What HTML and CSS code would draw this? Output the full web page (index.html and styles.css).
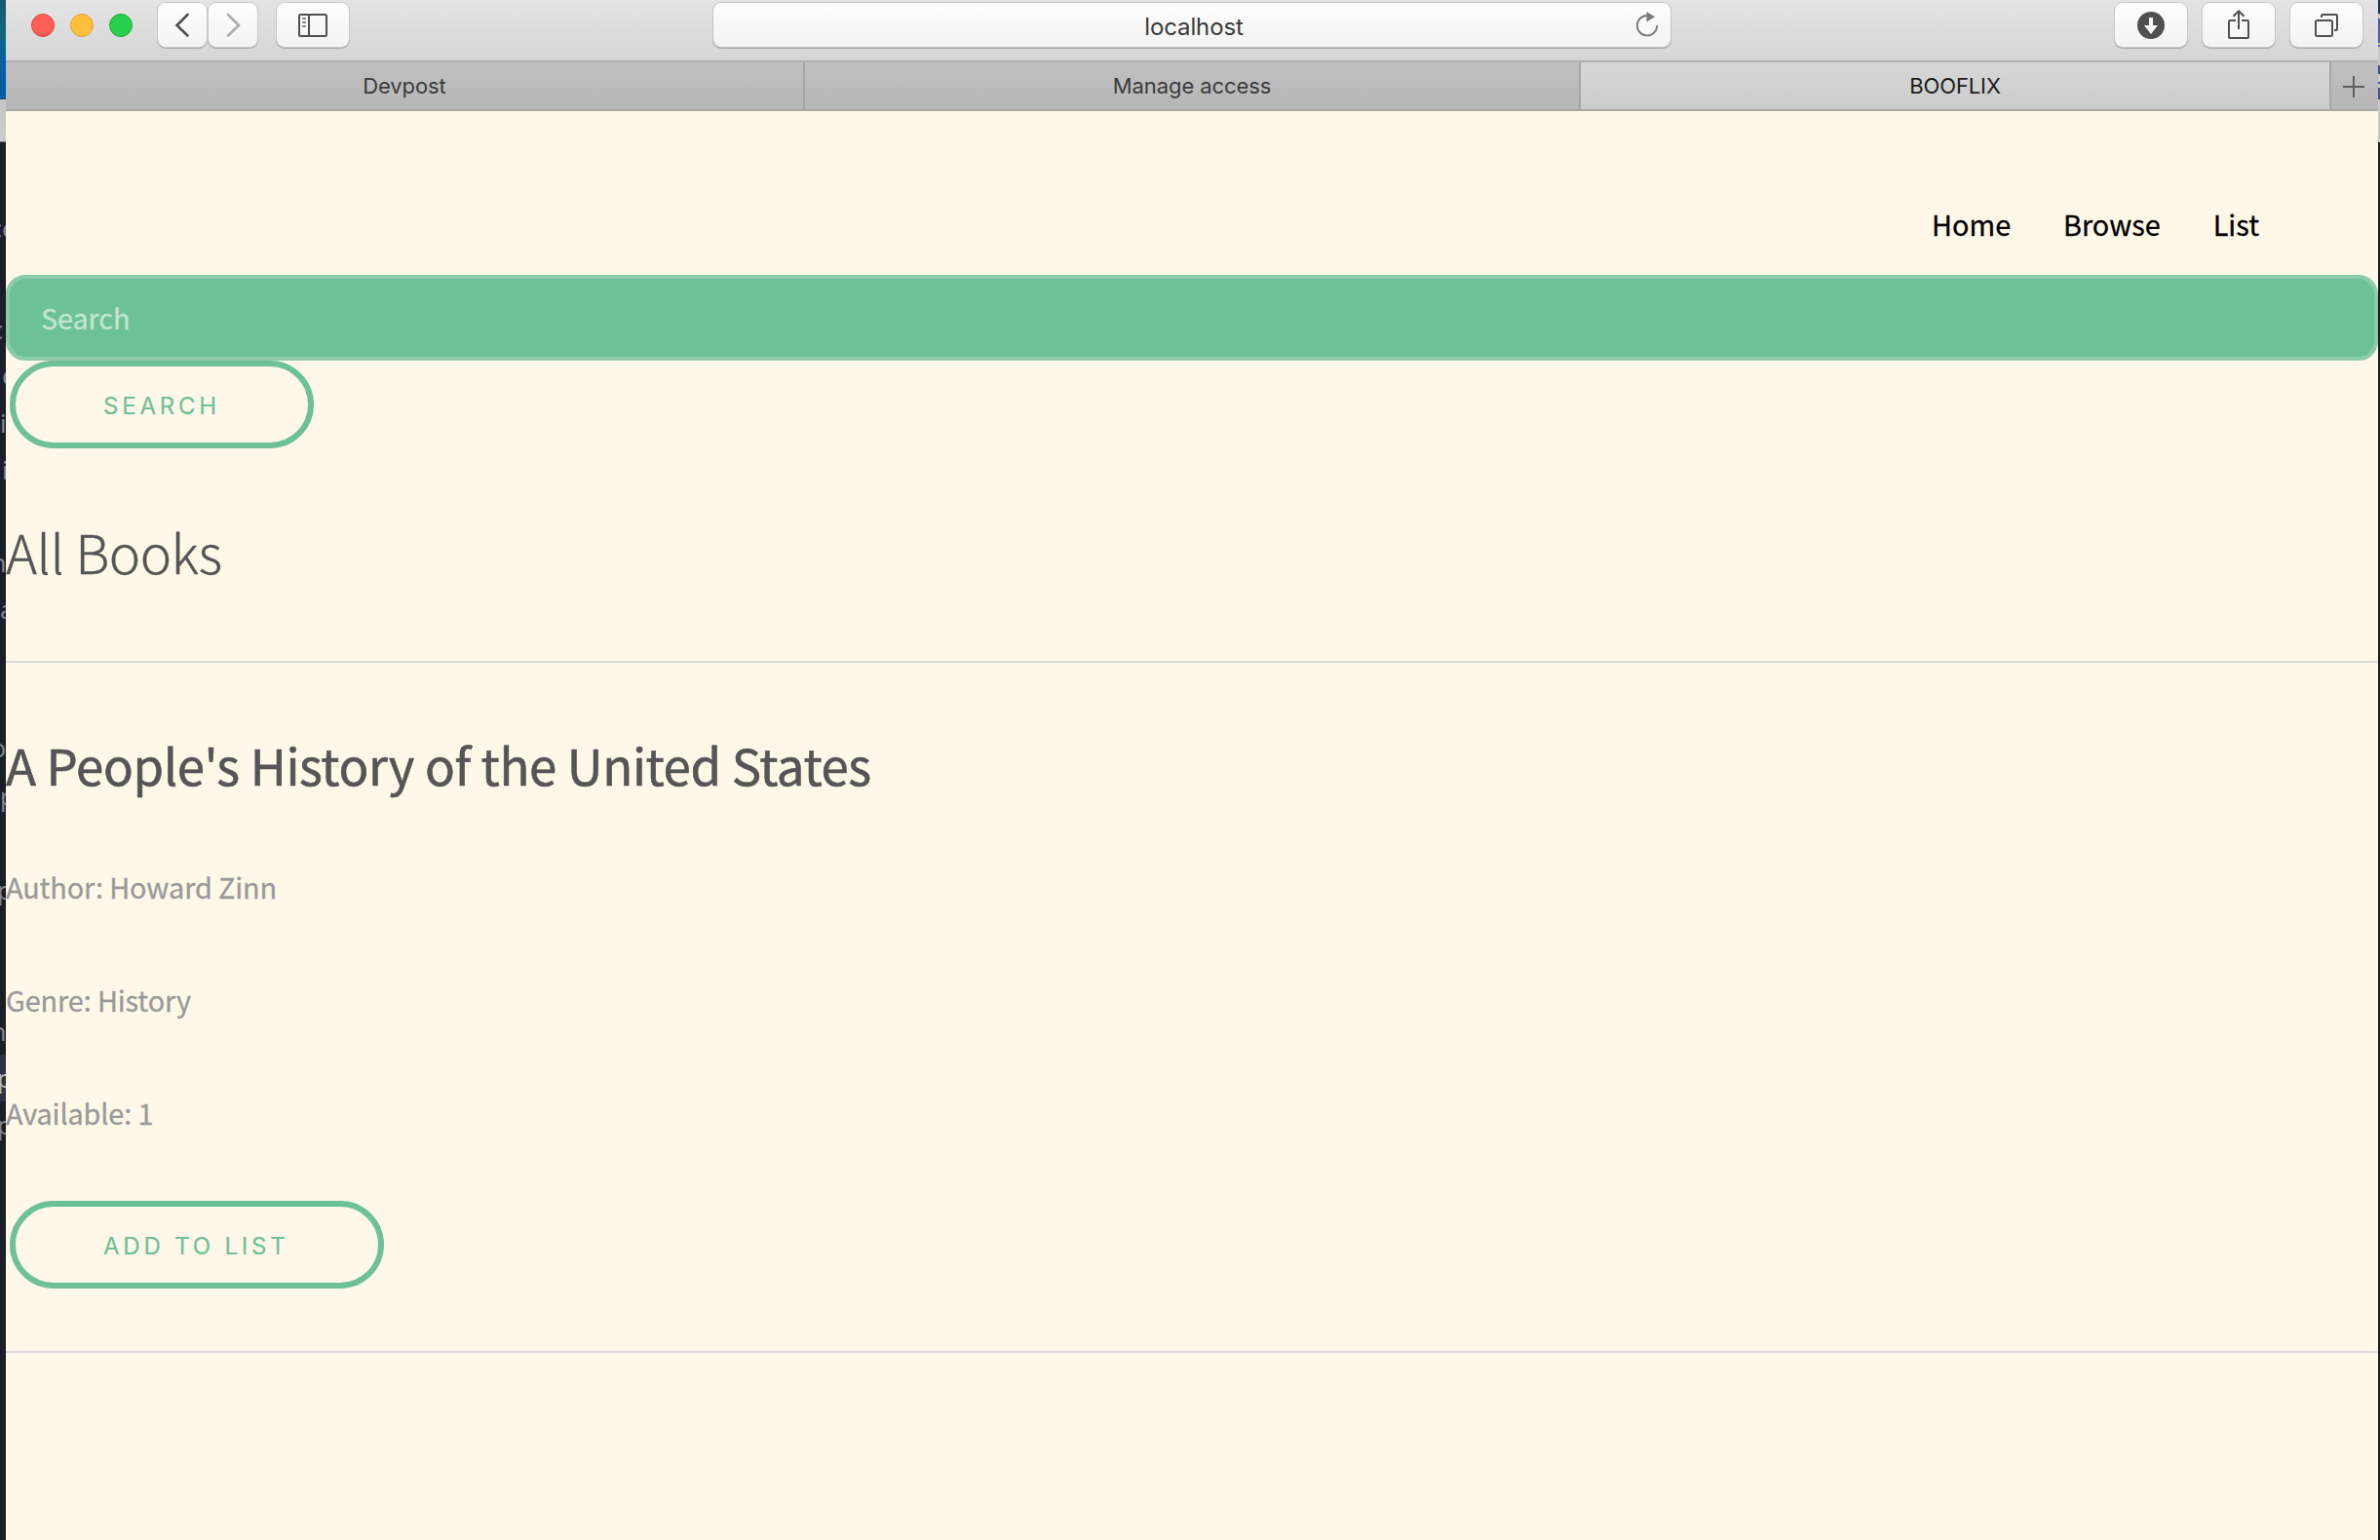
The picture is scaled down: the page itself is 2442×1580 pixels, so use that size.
FILE: index.html
```
<!DOCTYPE html>
<html lang="en">

<head>
    <meta charset="utf-8">
    <title>BOOFLIX</title>
    <link rel="stylesheet" href="styles.css">
</head>

<body>
    <div class="desktop">

        <!--windows behind the browser-->
        <div class="behind left">
            <span class="y242 l11">co</span>
            <span class="y346 l9">c</span>
            <span class="y393 r3">o</span>
            <span class="y442">i</span>
            <span class="y490 r3">i</span>
            <span class="y585 l9">n</span>
            <span class="y633">a</span>
            <span class="y775 l9">o</span>
            <span class="y825">p</span>
            <span class="y921 l3">p</span>
            <span class="y1066 l9">n</span>
            <span class="y1114 l3 selected">p</span>
            <span class="y1162 l3">p</span>
        </div>

        <div class="browser">
            <div class="toolbar">
                <div class="lights">
                    <i class="red"></i>
                    <i class="yellow"></i>
                    <i class="green"></i>
                </div>
                <div class="arrows">
                    <div class="tool small">
                        <svg width="50" height="46" fill="none" stroke="#505050" stroke-width="2.6" stroke-linecap="round"><path d="M30.500 12 L19.500 23 L30.500 33.500"/></svg>
                    </div>
                    <div class="tool small">
                        <svg width="50" height="46" fill="none" stroke="#adadad" stroke-width="2.6" stroke-linecap="round"><path d="M20 12 L31 23 L20 33.500"/></svg>
                    </div>
                </div>
                <div class="tool sidebar">
                    <svg width="74" height="46" fill="none" stroke="#505050" stroke-width="2">
                        <rect x="23" y="12" width="28" height="22" rx="1.500"/>
                        <path d="M33 12 V34"/>
                        <path d="M26 16 H30 M26 20 H30 M26 24 H30" stroke="#8a8a8a" stroke-width="1.800"/>
                    </svg>
                </div>
                <div class="address">
                    localhost
                    <svg class="reload" width="26" height="30" viewBox="0 0 26 30">
                        <path d="M13 5 A10.200 10.200 0 1 0 23.200 15" fill="none" stroke="#7b7b7b" stroke-width="1.900"/>
                        <path d="M12.500 1 L21 6.200 L12.500 11.500 Z" fill="#7b7b7b"/>
                    </svg>
                </div>
                <div class="tools-right">
                    <div class="tool">
                        <svg width="74" height="46">
                            <circle cx="37" cy="23" r="14" fill="#505050"/>
                            <path d="M35 15 H39 V23 H44 L37 32 L30 23 H35 Z" fill="#fafafa"/>
                        </svg>
                    </div>
                    <div class="tool">
                        <svg width="74" height="46" fill="none" stroke="#505050" stroke-width="2">
                            <path d="M34 18 H28 Q27 18 27 19 V35 Q27 36 28 36 H46 Q47 36 47 35 V19 Q47 18 46 18 H40"/>
                            <path d="M37 27 V8 M31.500 13.800 L37 8.300 L42.500 13.800"/>
                        </svg>
                    </div>
                    <div class="tool">
                        <svg width="74" height="46" fill="none" stroke="#505050" stroke-width="2">
                            <rect x="26" y="18" width="17" height="16" rx="1.500"/>
                            <path d="M32 15 V13 Q32 12 33 12 H47 Q48 12 48 13 V27 Q48 28 47 28 H45"/>
                        </svg>
                    </div>
                </div>
            </div>

            <div class="tabs">
                <div class="tab first">Devpost</div>
                <div class="tab second">Manage access</div>
                <div class="tab active">BOOFLIX</div>
                <div class="tab new">
                    <svg width="22" height="22" stroke="#5e5e5e" stroke-width="2"><path d="M0 11 H22 M11 0 V22"/></svg>
                </div>
            </div>

            <div class="page">
                <nav>
                    <a>Home</a>
                    <a>Browse</a>
                    <a>List</a>
                </nav>
                <input class="search" type="text" placeholder="Search">
                <button class="btn btn-search">SEARCH</button>

                <h1>All Books</h1>
                <hr>
                <div class="book">
                    <h2>A People's History of the United States</h2>
                    <p class="author">Author: Howard Zinn</p>
                    <p class="genre">Genre: History</p>
                    <p class="available">Available: 1</p>
                    <button class="btn btn-add">ADD TO LIST</button>
                </div>
                <hr>
            </div>
        </div>

        <div class="behind right"></div>
    </div>
</body>

</html>
```

FILE: styles.css
```
* {
    margin: 0;
    padding: 0;
    box-sizing: border-box;
}

:root {
    --green: #6dc196;
    --page-font: "Noto Sans CJK SC", "Noto Sans", sans-serif;
    --ui-font: Inter, "Liberation Sans", sans-serif;
}

body {
    width: 2442px;
    height: 1580px;
    overflow: hidden;
    background-color: #1b1e24;
}

svg {
    display: block;
}

.desktop {
    display: flex;
    height: 1580px;
}

/* slivers of the windows behind */
.behind {
    position: relative;
    overflow: hidden;
    flex: none;
}

.behind.left {
    width: 6px;
    background: linear-gradient(#17586f 0, #12687f 35px, #0560a4 65px, #0858a0 102px, #c6c6c6 102px, #cdcdcd 145px, #1b1e24 146px);
}

.behind.right {
    width: 2px;
    background: linear-gradient(#123a50 0 14px, #c8c8c8 14px 19px, #4c5fae 19px 44px, #c8c8c8 44px 46px, #4c5fae 46px 48px, #c8c8c8 48px 67px, #3d4f98 67px 76px, #c8c8c8 76px 84px, #3d4f98 84px 86px, #c8c8c8 86px 90px, #3d4f98 90px 102px, #c8c8c8 102px 146px, #1b1e24 146px);
}

.behind span {
    position: absolute;
    left: 0;
    width: 20px;
    height: 48px;
    margin-top: -32px;
    font: 25px/48px "Noto Sans", sans-serif;
    color: #7f8490;
}

.behind span.l3 { text-indent: -3px; }
.behind span.l9 { text-indent: -9px; }
.behind span.l11 { text-indent: -10px; }
.behind span.r3 { text-indent: 2px; }
.behind span.selected { color: #b4b7bd; background-color: #2f333d; }
.y242 { top: 242px; }
.y346 { top: 346px; }
.y393 { top: 393px; }
.y442 { top: 442px; }
.y490 { top: 490px; }
.y585 { top: 585px; }
.y633 { top: 633px; }
.y775 { top: 775px; }
.y825 { top: 825px; }
.y921 { top: 921px; }
.y1066 { top: 1066px; }
.y1114 { top: 1114px; }
.y1162 { top: 1162px; }

.browser {
    width: 2434px;
    flex: none;
}

/* toolbar */
.toolbar {
    display: flex;
    height: 64px;
    padding: 3px 16px 0 26px;
    border-bottom: 2px solid #b0b0b0;
    background: linear-gradient(#e4e4e4, #d5d5d5);
    font-family: var(--ui-font);
}

.lights {
    display: flex;
    gap: 16px;
    padding-top: 11px;
}

.lights i {
    width: 24px;
    height: 24px;
    border-radius: 50%;
    border: 1px solid;
}

.lights .red { background: #ff5f57; border-color: #e2463f; }
.lights .yellow { background: #febe3e; border-color: #e1a030; }
.lights .green { background: #27cf4c; border-color: #1dad2b; }

.tool {
    width: 74px;
    height: 45px;
    border-radius: 8px;
    background: linear-gradient(#fdfdfd, #f3f3f3);
    box-shadow: 0 0 0 1px #c9c9c9, 0 1px 0 1px #aaa;
}

.tool.small {
    width: 50px;
}

.arrows {
    display: flex;
    gap: 2px;
    margin-left: 26px;
}

.sidebar {
    margin-left: 20px;
}

.address {
    position: relative;
    width: 982px;
    height: 45px;
    margin-left: 374px;
    padding-left: 4px;
    border-radius: 8px;
    background: linear-gradient(#fdfdfd, #f3f3f3);
    box-shadow: 0 0 0 1px #c4c4c4, 0 1px 0 1px #a2a6a4;
    color: #3a3a3a;
    font-size: 24px;
    line-height: 49px;
    letter-spacing: -0.1px;
    text-align: center;
}

.reload {
    position: absolute;
    right: 11px;
    top: 8px;
}

.tools-right {
    display: flex;
    gap: 16px;
    margin-left: auto;
}

/* tabs */
.tabs {
    display: flex;
    height: 50px;
    border-bottom: 2px solid #a8a8a8;
    font-family: var(--ui-font);
    font-size: 22px;
    letter-spacing: -0.1px;
    color: #3b3b3b;
}

.tab {
    display: flex;
    justify-content: center;
    align-items: center;
    border-right: 2px solid #a6a6a6;
    background: linear-gradient(#c0c0c0, #b6b6b6);
}

.tab.first { width: 820px; }
.tab.second { width: 796px; }

.tab.active {
    width: 770px;
    color: #1c1c1c;
    background: linear-gradient(#d7d7d7, #cccccc);
}

.tab.new {
    width: 48px;
    padding: 2px 2px 0 0;
    border: 0;
}

/* page */
.page {
    height: 1466px;
    background-color: #fff7e7;
    font-family: var(--page-font);
    font-size: 28.8px;
    font-weight: 400;
    line-height: 52px;
}

nav {
    display: flex;
    justify-content: flex-end;
    gap: 54px;
    height: 168px;
    padding: 90px 122px 0 0;
    color: #000;
    -webkit-text-stroke: 0.3px;
}

.search {
    display: block;
    width: 100%;
    height: 88px;
    padding: 0 32px 2px;
    border: 4px solid #8dccab;
    border-radius: 20px;
    background-color: var(--green);
    font: inherit;
    letter-spacing: -0.1px;
    -webkit-text-stroke: 0.3px;
}

.search::placeholder {
    color: #c2e5d2;
    opacity: 1;
}

.btn {
    display: block;
    height: 90px;
    margin-left: 4px;
    padding: 2px 0 0 90px;
    border: 6px solid var(--green);
    border-radius: 45px;
    background: none;
    color: var(--green);
    font: 24px var(--ui-font);
    letter-spacing: 3.8px;
    text-align: left;
    white-space: nowrap;
    -webkit-text-stroke: 0.2px;
}

.btn-search { width: 312px; }
.btn-add { width: 384px; }

h1 {
    margin: 66px 0 72px;
    color: #555;
    font-size: 54.6px;
    font-weight: 300;
    line-height: 80px;
    letter-spacing: -0.5px;
    -webkit-text-stroke: 0.3px;
}

hr {
    height: 2px;
    border: 0;
    background-color: #dadada;
}

.book {
    padding: 66px 0 64px;
}

h2 {
    margin-bottom: 62px;
    color: #555;
    font-size: 51px;
    font-weight: 400;
    line-height: 76px;
    letter-spacing: -0.41px;
    -webkit-text-stroke: 0.6px;
}

.book p {
    margin-bottom: 64px;
    color: #999;
    letter-spacing: -0.1px;
    -webkit-text-stroke: 0.3px;
}
```
